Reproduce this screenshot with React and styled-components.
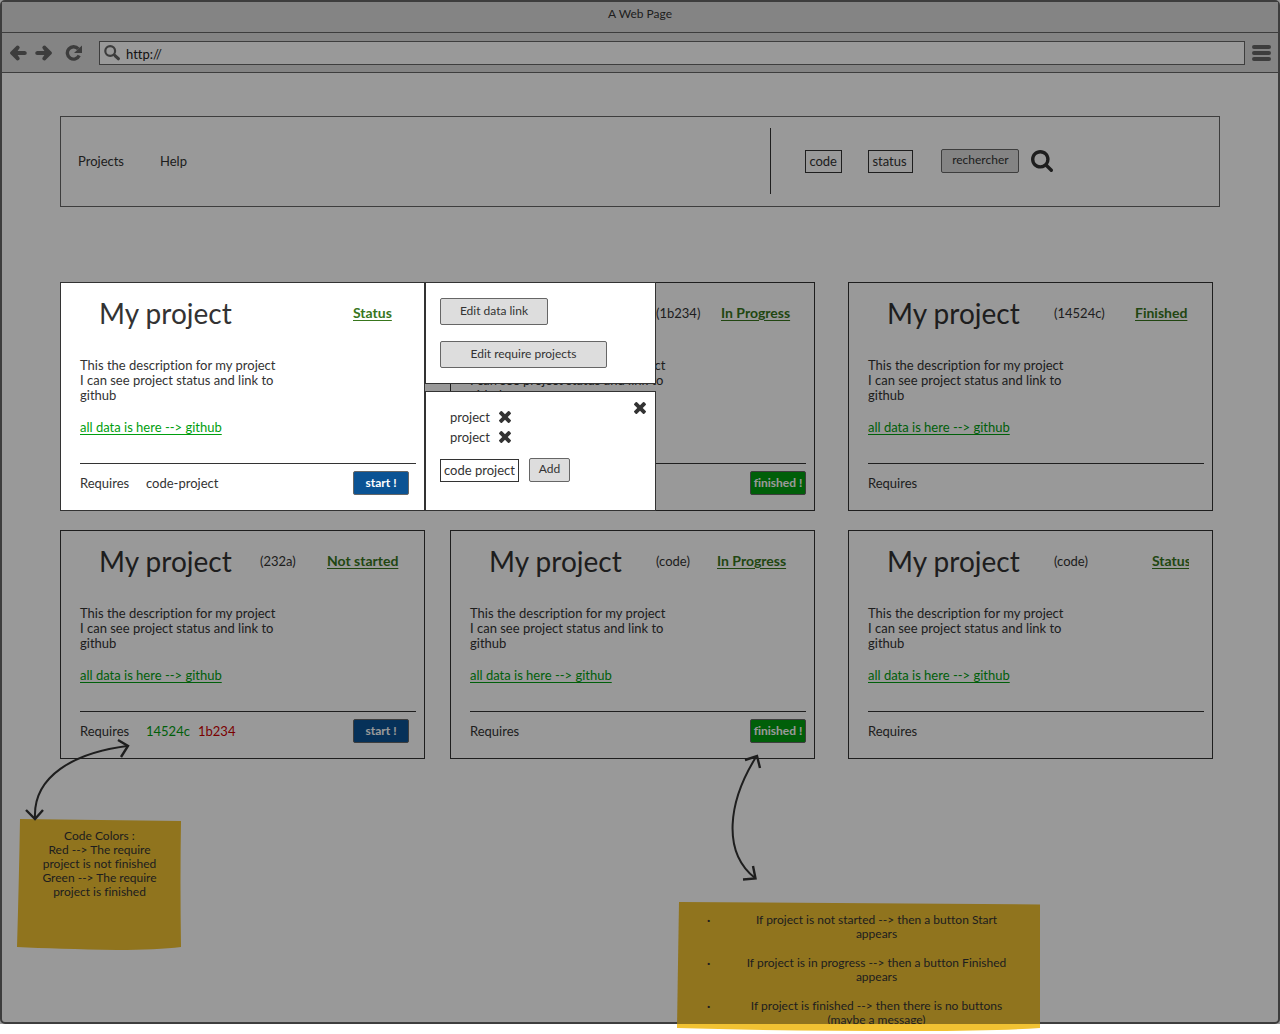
import React from "react";
import styled, { createGlobalStyle, css } from "styled-components";

const ink = "#333333";
const chrome = "#666666";
const barGrey = "#dddddd";

const GlobalStyle = createGlobalStyle`
  *, *::before, *::after { box-sizing: border-box; }
  body {
    margin: 0;
    background: #ffffff;
    color: ${ink};
    font-family: Lato, "Open Sans", sans-serif;
    font-size: 13px;
    line-height: 14px;
    font-variant-ligatures: none;
  }
  button, input { font: inherit; color: inherit; }
  h1, h2, p, ul { margin: 0; padding: 0; font-weight: 400; }
  ul { list-style: none; }
`;

const Page = styled.div`
  padding-bottom: 10px;
`;

const Frame = styled.div`
  position: relative;
  border: 2px solid ${chrome};
  border-radius: 5px;
  background: #ffffff;
`;

const Shade = styled.div`
  position: absolute;
  inset: -2px;
  background: rgba(0, 0, 0, 0.4);
  z-index: 5;
  pointer-events: none;
`;

const TitleBar = styled.header`
  height: 31px;
  padding-top: 5px;
  border-bottom: 1px solid ${chrome};
  background: ${barGrey};
  text-align: center;
`;

const PageTitle = styled.h1`
  font-size: 12px;
  line-height: 14px;
`;

const Toolbar = styled.div`
  display: flex;
  align-items: center;
  height: 40px;
  padding: 0 7px;
  border-bottom: 1px solid ${chrome};
  background: ${barGrey};
`;

const NavGroup = styled.div`
  display: flex;
  gap: 8px;
  width: 90px;
`;

const IconButton = styled.button`
  display: flex;
  padding: 0;
  border: 0;
  background: none;
  color: ${(p) => p.$tone || ink};
  cursor: pointer;
  &:last-child { margin-left: ${(p) => p.$push || 0}px; }
`;

const AddressBar = styled.label`
  display: flex;
  flex: 1;
  align-items: center;
  gap: 6px;
  height: 24px;
  margin-right: 7px;
  padding-left: 4px;
  border: 1px solid ${chrome};
  background: #ffffff;
  color: ${chrome};
`;

const AddressInput = styled.input`
  flex: 1;
  min-width: 0;
  padding: 2px 0 0;
  border: 0;
  outline: 0;
  background: none;
  color: #222222;
`;

const Content = styled.main`
  padding: 43px 58px 263px;
`;

const Header = styled.div`
  display: grid;
  grid-template-columns: 710fr 449fr;
  align-items: center;
  padding: 11px 0 12px;
  border: 1px solid ${chrome};
`;

const Menu = styled.nav`
  display: flex;
  gap: 36px;
  padding-left: 17px;
`;

const MenuLink = styled.a`
  color: inherit;
  text-decoration: none;
`;

const SearchForm = styled.form`
  display: flex;
  align-items: center;
  height: 66px;
  padding-left: 34px;
  border-left: 1px solid ${ink};
`;

const TextBox = styled.input`
  width: ${(p) => p.$width}px;
  height: 23px;
  margin-right: ${(p) => p.$after}px;
  padding: 0 3px;
  border: 1px solid ${ink};
  border-radius: 0;
  outline: 0;
  background: #ffffff;
`;

const tones = {
  grey: css`padding: 0 0 2px; background: ${barGrey}; color: ${ink};`,
  blue: css`padding: 0; background: #0b5394; color: #ffffff; font-weight: 700;`,
  green: css`padding: 0; background: #009e0f; color: #ffffff; font-weight: 700;`,
};

const Button = styled.button`
  width: ${(p) => p.$width}px;
  height: ${(p) => p.$height || 24}px;
  border: 1px solid ${chrome};
  border-radius: 2px;
  font-size: 12px;
  white-space: nowrap;
  cursor: pointer;
  ${(p) => tones[p.$tone || "grey"]}
`;

const SearchIconSlot = styled.span`
  display: flex;
  margin-left: 12px;
`;

const Board = styled.section`
  display: grid;
  grid-template-columns: minmax(0, 1fr) 25px minmax(0, 1fr) 33px minmax(0, 1fr);
  row-gap: 19px;
  margin: 75px 7px 0 0;
`;

const Slot = styled.div`
  position: relative;
  grid-column: ${(p) => p.$column};
  z-index: ${(p) => (p.$lifted ? 6 : "auto")};
`;

const Card = styled.article`
  display: flex;
  flex-direction: column;
  height: 229px;
  border: 1px solid ${ink};
  background: #ffffff;
`;

const CardTop = styled.div`
  display: flex;
  align-items: center;
  height: 60px;
  padding: 0 23px 0 38px;
`;

const CardTitle = styled.h2`
  width: ${(p) => p.$width}px;
  font-size: 28px;
  line-height: 34px;
  white-space: nowrap;
`;

const Status = styled.a`
  width: ${(p) => p.$width}px;
  margin-left: auto;
  overflow: ${(p) => (p.$clip ? "hidden" : "visible")};
  color: #38761d;
  font-size: 14px;
  line-height: 18px;
  font-weight: 700;
  text-underline-offset: 2px;
  white-space: nowrap;
`;

const Description = styled.p`
  margin: 15px 0 17px 19px;
  line-height: 15px;
`;

const DataLink = styled.a`
  align-self: flex-start;
  margin-left: 19px;
  color: #009e0f;
  text-underline-offset: 2px;
`;

const CardFoot = styled.div`
  display: flex;
  align-items: center;
  margin: auto 8px 15px 19px;
  padding: 7px ${(p) => (p.$inset ? 7 : 0)}px 0 0;
  height: 32px;
  border-top: 1px solid ${ink};
`;

const FootLabel = styled.span`
  width: 66px;
`;

const Requirement = styled.span`
  width: ${(p) => (p.$tone ? "52px" : "auto")};
  color: ${(p) => p.$tone || "inherit"};
`;

const FootAction = styled.div`
  display: flex;
  margin-left: auto;
`;

const Popovers = styled.div`
  position: absolute;
  top: 0;
  left: 100%;
  display: flex;
  flex-direction: column;
  gap: 7px;
  width: 231px;
  height: 100%;
`;

const Panel = styled.div`
  position: relative;
  display: flex;
  flex-direction: column;
  flex: ${(p) => (p.$grow ? 1 : "none")};
  align-items: flex-start;
  gap: ${(p) => p.$gap}px;
  padding: 15px 14px;
  border: 1px solid ${ink};
  background: #ffffff;
`;

const LinkedList = styled.ul`
  padding: 0 0 0 10px;
`;

const LinkedItem = styled.li`
  display: flex;
  align-items: center;
  height: 20px;
`;

const LinkedName = styled.span`
  width: 49px;
`;

const AddRow = styled.form`
  display: flex;
  align-items: center;
`;

const CloseCorner = styled.div`
  position: absolute;
  top: 10px;
  right: 9px;
`;

const NoteBox = styled.aside`
  position: absolute;
  top: ${(p) => p.$top}px;
  left: ${(p) => p.$left}px;
  width: ${(p) => p.$width}px;
  height: ${(p) => p.$height}px;
  font-size: 12px;
  z-index: 2;
`;

const NoteShape = styled.svg`
  position: absolute;
  inset: 0;
  width: 100%;
  height: 100%;
  z-index: -1;
`;

const NoteText = styled.p`
  padding: 10px 20px 0;
  text-align: center;
`;

const RuleList = styled.ul`
  display: flex;
  flex-direction: column;
  gap: 15px;
  height: 122px;
  padding: 11px 24px 0 30px;
  overflow: hidden;
`;

const Rule = styled.li`
  display: grid;
  grid-template-columns: 30px 1fr;
  text-align: center;
  &::before { content: "·"; font-weight: 700; text-align: left; }
`;

const Arrow = styled.svg`
  position: absolute;
  top: ${(p) => p.$top}px;
  left: ${(p) => p.$left}px;
  overflow: visible;
  fill: none;
  stroke: ${ink};
  stroke-width: 2;
  z-index: 3;
  pointer-events: none;
`;

const SearchGlyph = () => (
  <svg width="22" height="22" viewBox="64 128 1664 1664" fill="currentColor" aria-hidden="true">
    <path d="M1216 832q0-185-131.5-316.5t-316.5-131.5-316.5 131.5-131.5 316.5 131.5 316.5 316.5 131.5 316.5-131.5 131.5-316.5zm512 832q0 52-38 90t-90 38q-54 0-90-38l-343-342q-179 124-399 124-143 0-273.5-55.5t-225-150-150-225-55.5-273.5 55.5-273.5 150-225 225-150 273.5-55.5 273.5 55.5 225 150 150 225 55.5 273.5q0 220-124 399l343 343q37 37 37 90z" />
  </svg>
);

const LensGlyph = () => (
  <svg width="16" height="16" viewBox="0 0 16 16" fill="none" stroke="currentColor" aria-hidden="true">
    <circle cx="6.200" cy="6" r="4.900" strokeWidth="2.200" />
    <path d="M9.500 9.300L11 10.700" strokeWidth="2" />
    <path d="M11.200 10.800L14.300 13.700" strokeWidth="3.200" strokeLinecap="round" />
  </svg>
);

const CrossGlyph = () => (
  <svg width="12" height="12" viewBox="302 366 1188 1188" fill="currentColor" aria-hidden="true">
    <path d="M1490 1322q0 40-28 68l-136 136q-28 28-68 28t-68-28l-294-294-294 294q-28 28-68 28t-68-28l-136-136q-28-28-28-68t28-68l294-294-294-294q-28-28-28-68t28-68l136-136q28-28 68-28t68 28l294 294 294-294q28-28 68-28t68 28l136 136q28 28 28 68t-28 68l-294 294 294 294q28 28 28 68z" />
  </svg>
);

const ArrowGlyph = ({ flip }) => (
  <svg width="18" height="16" viewBox="0 0 18 16" fill="currentColor" aria-hidden="true">
    <g transform={flip ? "translate(18 0) scale(-1 1)" : undefined}>
      <path d="M1.400 7.100L7.700 0.800Q8.700 0 9.900 0.900Q11.300 2 10.500 3.300L8.600 5.900H15.800Q17.800 6.200 17.800 8Q17.800 9.800 15.800 10.100H8.600L10.500 12.700Q11.300 14 9.900 15.100Q8.700 16 7.700 15.200L1.400 8.900Q0.600 8 1.400 7.100Z" />
    </g>
  </svg>
);

const ReloadGlyph = () => (
  <svg width="18" height="16" viewBox="0 0 18 16" aria-hidden="true">
    <path d="M13.300 3.900A6.200 6.200 0 1 0 14.200 10.500" fill="none" stroke="currentColor" strokeWidth="3.400" />
    <path d="M17 0.500V8H9Z" fill="currentColor" />
  </svg>
);

const MenuGlyph = () => (
  <svg width="19" height="16" viewBox="0 0 19 16" stroke="currentColor" strokeWidth="4" strokeLinecap="round" aria-hidden="true">
    <path d="M2 2H17M2 8H17M2 14H17" />
  </svg>
);

const projects = [
  { column: 1, status: "Status", statusWidth: 48, titleWidth: 167, requires: [{ code: "code-project" }], action: "start", editing: true },
  { column: 3, code: "(1b234)", status: "In Progress", statusWidth: 70, titleWidth: 167, requires: [], action: "finish" },
  { column: 5, code: "(14524c)", status: "Finished", statusWidth: 54, titleWidth: 167, requires: [] },
  {
    column: 1, code: "(232a)", status: "Not started", statusWidth: 74, titleWidth: 161,
    requires: [{ code: "14524c", tone: "#009e0f" }, { code: "1b234", tone: "#cc0000" }],
    action: "start", note: "colors",
  },
  { column: 3, code: "(code)", status: "In Progress", statusWidth: 74, titleWidth: 167, requires: [], action: "finish", note: "rules" },
  { column: 5, code: "(code)", status: "Status", statusWidth: 37, titleWidth: 167, clip: true, requires: [] },
];

const keepPage = (e) => e.preventDefault();

function EditPopovers() {
  return (
    <Popovers>
      <Panel $gap={16}>
        <Button type="button" $width={108} $height={27}>Edit data link</Button>
        <Button type="button" $width={167} $height={27}>Edit require projects</Button>
      </Panel>
      <Panel $grow $gap={11}>
        <CloseCorner>
          <IconButton type="button" aria-label="Close"><CrossGlyph /></IconButton>
        </CloseCorner>
        <LinkedList>
          {[0, 1].map((i) => (
            <LinkedItem key={i}>
              <LinkedName>project</LinkedName>
              <IconButton type="button" aria-label="Remove project"><CrossGlyph /></IconButton>
            </LinkedItem>
          ))}
        </LinkedList>
        <AddRow onSubmit={keepPage}>
          <TextBox aria-label="Project code" defaultValue="code project" $width={79} $after={10} />
          <Button type="submit" $width={41}>Add</Button>
        </AddRow>
      </Panel>
    </Popovers>
  );
}

function ColorNote() {
  return (
    <>
      <Arrow $top={208} $left={-36} width="106" height="82">
        <path d="M11 80C9 38 50 15 103 8" />
        <path d="M2 72L11 81L19 72M94 2L104 8L97 19" strokeWidth="2.4" />
      </Arrow>
      <NoteBox $top={289} $left={-43} $width={165} $height={131}>
        <NoteShape viewBox="0 0 165 131" preserveAspectRatio="none" aria-hidden="true">
          <path d="M3 0L164 2Q163 60 164 128Q140 131 100 131Q40 130 0 128Q2 60 3 0Z" fill="#f1c232" />
        </NoteShape>
        <NoteText>
          Code Colors :<br />Red --&gt; The require<br />project is not finished<br />
          Green --&gt; The require<br />project is finished
        </NoteText>
      </NoteBox>
    </>
  );
}

function RulesNote() {
  return (
    <>
      <Arrow $top={224} $left={280} width="32" height="126">
        <path d="M26 3C-2 48 -8 98 25 124" />
        <path d="M15 6L27 2L30 14M23 112L25.5 124.500L13 125.500" strokeWidth="2.4" />
      </Arrow>
      <NoteBox $top={372} $left={227} $width={363} $height={129}>
        <NoteShape viewBox="0 0 363 129" preserveAspectRatio="none" aria-hidden="true">
          <path d="M2 0L363 2.500V126Q320 129 240 129Q100 129 0 126Q1 60 2 0Z" fill="#f1c232" />
        </NoteShape>
        <RuleList>
          <Rule><span>If project is not started --&gt; then a button Start<br />appears</span></Rule>
          <Rule><span>If project is in progress --&gt; then a button Finished<br />appears</span></Rule>
          <Rule><span>If project is finished --&gt; then there is no buttons<br />(maybe a message)</span></Rule>
        </RuleList>
      </NoteBox>
    </>
  );
}

function ProjectCard({ project }) {
  const { column, code, status, statusWidth, titleWidth, clip, requires, action, editing, note } = project;
  return (
    <Slot $column={column} $lifted={editing}>
      <Card>
        <CardTop>
          <CardTitle $width={titleWidth}>My project</CardTitle>
          {code && <span>{code}</span>}
          <Status href="#status" $width={statusWidth} $clip={clip}>{status}</Status>
        </CardTop>
        <Description>
          This the description for my project<br />I can see project status and link to<br />github
        </Description>
        <DataLink href="#github">all data is here --&gt; github</DataLink>
        <CardFoot $inset={action === "start"}>
          <FootLabel>Requires</FootLabel>
          {requires.map((r) => (
            <Requirement key={r.code} $tone={r.tone}>{r.code}</Requirement>
          ))}
          {action && (
            <FootAction>
              <Button type="button" $width={56} $tone={action === "start" ? "blue" : "green"}>
                {action === "start" ? "start !" : "finished !"}
              </Button>
            </FootAction>
          )}
        </CardFoot>
      </Card>
      {editing && <EditPopovers />}
      {note === "colors" && <ColorNote />}
      {note === "rules" && <RulesNote />}
    </Slot>
  );
}

export default function App() {
  return (
    <Page>
      <GlobalStyle />
      <Frame>
        <TitleBar><PageTitle>A Web Page</PageTitle></TitleBar>
        <Toolbar>
          <NavGroup>
            <IconButton type="button" aria-label="Back" $tone={chrome}><ArrowGlyph /></IconButton>
            <IconButton type="button" aria-label="Forward" $tone={chrome}><ArrowGlyph flip /></IconButton>
            <IconButton type="button" aria-label="Reload" $tone={chrome} $push={4}><ReloadGlyph /></IconButton>
          </NavGroup>
          <AddressBar>
            <LensGlyph />
            <AddressInput aria-label="Address" defaultValue="http://" />
          </AddressBar>
          <IconButton type="button" aria-label="Browser menu" $tone={chrome}><MenuGlyph /></IconButton>
        </Toolbar>
        <Content>
          <Header>
            <Menu>
              <MenuLink href="#projects">Projects</MenuLink>
              <MenuLink href="#help">Help</MenuLink>
            </Menu>
            <SearchForm onSubmit={keepPage}>
              <TextBox aria-label="Code" defaultValue="code" $width={37} $after={26} />
              <TextBox aria-label="Status" defaultValue="status" $width={45} $after={28} />
              <Button type="submit" $width={78}>rechercher</Button>
              <SearchIconSlot><SearchGlyph /></SearchIconSlot>
            </SearchForm>
          </Header>
          <Board>
            {projects.map((p, i) => <ProjectCard key={i} project={p} />)}
          </Board>
        </Content>
        <Shade />
      </Frame>
    </Page>
  );
}
